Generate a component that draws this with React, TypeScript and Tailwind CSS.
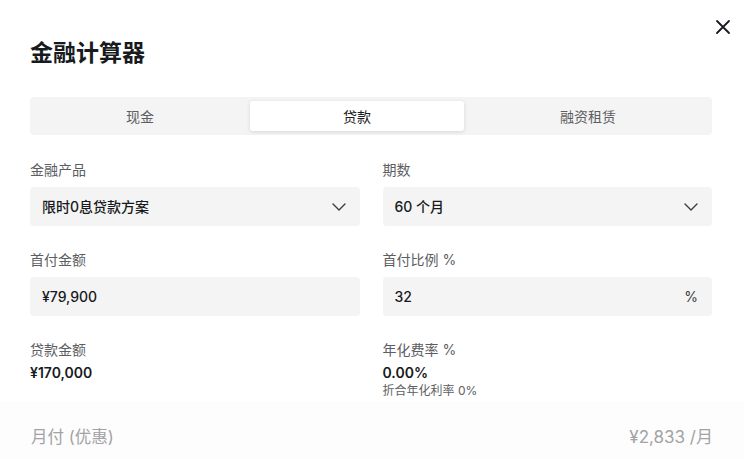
import { useState } from 'react';

const tabs = ['现金', '贷款', '融资租赁'];

function Chevron() {
  return (
    <svg width="14" height="8" viewBox="0 0 14 8" fill="none" className="text-[#393c41]">
      <path d="M1 1l6 6 6-6" stroke="currentColor" strokeWidth="1.4" strokeLinecap="round" strokeLinejoin="round" />
    </svg>
  );
}

function Label({ children }: { children: React.ReactNode }) {
  return <div className="h-5 text-[14px] leading-5 text-[#5c5e62]">{children}</div>;
}

function Field({ label, value, select, suffix }: { label: string; value: string; select?: boolean; suffix?: string }) {
  return (
    <div>
      <Label>{label}</Label>
      <div className="mt-[7px] flex h-[39px] items-center justify-between rounded-[4px] bg-[#f4f4f4] pl-3 pr-[14px]">
        <span className="text-[14px] font-medium text-[#171a20]">{value}</span>
        {select && <Chevron />}
        {suffix && <span className="text-[14px] text-[#393c41]">{suffix}</span>}
      </div>
    </div>
  );
}

export default function App() {
  const [active, setActive] = useState(1);

  return (
    <div
      className="relative h-[459px] w-[744px] overflow-hidden bg-white"
      style={{ fontFamily: 'Inter, "Noto Sans CJK SC", sans-serif' }}
    >
      <button className="absolute right-[12px] top-[18px] p-[1px] text-[#171a20]" aria-label="关闭">
        <svg width="16" height="16" viewBox="0 0 16 16" fill="none">
          <path d="M2 2l12 12M14 2L2 14" stroke="currentColor" strokeWidth="1.8" strokeLinecap="round" />
        </svg>
      </button>

      <div className="px-[30px] pt-[38px]">
        <h1 className="text-[23px] font-semibold leading-[30px] text-[#171a20]">金融计算器</h1>

        <div className="mt-[29px] flex h-[38px] w-[682px] gap-[3px] rounded-[4px] bg-[#f4f4f4] px-[3px] py-1">
          {tabs.map((t, i) => (
            <button
              key={t}
              onClick={() => setActive(i)}
              className={
                (i === 2 ? 'flex-1 ' : 'w-[214px] ') +
                (i === active
                  ? 'rounded-[3px] bg-white text-[14px] text-[#171a20] shadow-[0_1px_4px_rgba(0,0,0,0.12)]'
                  : 'text-[14px] text-[#5c5e62]')
              }
            >
              {t}
            </button>
          ))}
        </div>

        <div className="mt-[25px] grid w-[682px] grid-cols-2 gap-x-[23px] gap-y-[24px]">
          <Field label="金融产品" value="限时0息贷款方案" select />
          <Field label="期数" value="60 个月" select />
          <Field label="首付金额" value="¥79,900" />
          <Field label="首付比例 %" value="32" suffix="%" />
          <div>
            <Label>贷款金额</Label>
            <div className="mt-[3px] text-[14px] font-semibold leading-5 text-[#171a20]">¥170,000</div>
          </div>
          <div>
            <Label>年化费率 %</Label>
            <div className="mt-[3px] text-[14px] font-semibold leading-5 text-[#171a20]">0.00%</div>
            <div className="text-[12px] leading-4 text-[#5c5e62]">折合年化利率 0%</div>
          </div>
        </div>
      </div>

      <div className="absolute inset-x-0 bottom-0 h-[58px] bg-gradient-to-b from-[rgba(252,252,252,0.8)] to-[#fdfdfd]">
        <div className="flex items-center justify-between px-[31px] pt-[24px] leading-6 text-[#a2a3a5]">
          <span className="text-[16.5px]">月付 (优惠)</span>
          <span className="text-[17px]">¥2,833 /月</span>
        </div>
      </div>
    </div>
  );
}
